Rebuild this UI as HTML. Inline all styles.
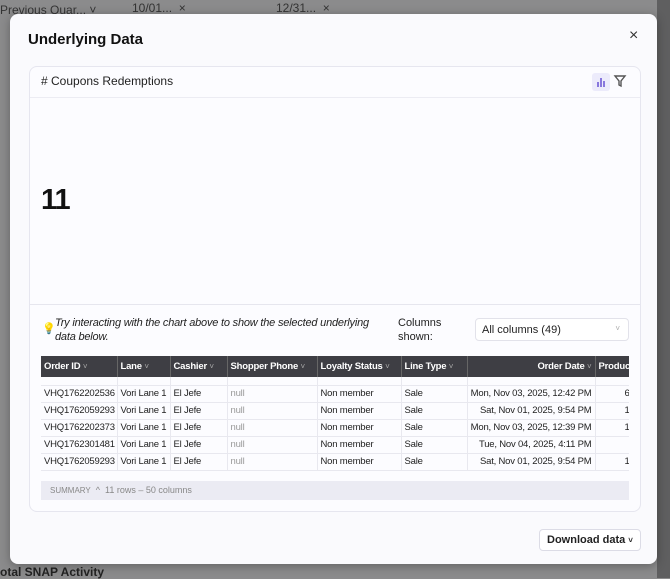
<!DOCTYPE html>
<html><head><style>
*{box-sizing:border-box;margin:0;padding:0}
body{width:670px;height:578px;overflow:hidden;background:#8b8b8c;font-family:"Liberation Sans",sans-serif;position:relative}
.bgtxt{position:absolute;color:#222;font-size:12px}
.modal{position:absolute;left:10px;top:14px;width:647px;height:550px;background:#fafafd;border-radius:8px;box-shadow:0 2px 10px rgba(0,0,0,.3)}
.abs{position:absolute}
.card{position:absolute;left:19px;top:52px;width:612px;height:446px;border:1px solid #e6e6ef;border-radius:8px;background:#fcfcff}
table{border-collapse:collapse;font-size:9.5px;color:#222;table-layout:fixed;letter-spacing:-0.2px}
th{background:#3e3e44;color:#fff;font-weight:bold;height:21px;text-align:left;padding:0 3px;border-right:1px solid #666;white-space:nowrap;overflow:hidden}
td{height:17px;line-height:16px;padding:0 3px;border-right:1px solid #e8e8ef;border-bottom:1px solid #e8e8ef;white-space:nowrap;overflow:hidden}
tr.sp td{height:8px;line-height:0;font-size:0;padding:0}
.ch{font-size:8px;color:#aaa;font-weight:normal}
</style></head><body>
<div class="bgtxt" style="left:0;top:3px;color:#333">Previous Quar... ˅</div>
<div class="bgtxt" style="left:132px;top:1px;color:#333">10/01... &nbsp;×</div>
<div class="bgtxt" style="left:276px;top:1px;color:#333">12/31... &nbsp;×</div>
<div class="bgtxt" style="left:0;top:565px;font-weight:bold;font-size:12px">otal SNAP Activity</div>
<div class="abs" style="left:657px;top:0;width:13px;height:578px;background:#5f5f60"></div>
<div class="modal">
  <div class="abs" style="left:18px;top:17px;font-size:15px;font-weight:bold;color:#111">Underlying Data</div>
  <div class="abs" style="left:619px;top:13px;font-size:16px;color:#333">×</div>
  <div class="card">
    <div class="abs" style="left:11px;top:7px;font-size:12px;color:#222"># Coupons Redemptions</div>
    <div class="abs" style="left:562px;top:6px;width:18px;height:18px;background:#ecebfb;border-radius:3px">
      <svg width="18" height="18"><g fill="#8877dd"><rect x="5" y="9" width="2" height="5"/><rect x="8" y="5" width="2" height="9"/><rect x="11" y="8" width="2" height="6"/></g></svg></div>
    <svg class="abs" style="left:583px;top:6px" width="14" height="16"><path d="M2 3h10l-4 5v5l-2-1v-4z" fill="none" stroke="#555" stroke-width="1.4"/></svg>
    <div class="abs" style="left:0;top:30px;width:610px;border-top:1px solid #ececf3"></div>
    <div class="abs" style="left:11px;top:117px;font-size:29px;font-weight:bold;color:#111;letter-spacing:-1px">11</div>
    <div class="abs" style="left:0;top:237px;width:610px;border-top:1px solid #e6e6ee"></div>
    <div class="abs" style="left:12px;top:255px;font-size:11px;color:#e8c24a">💡</div>
    <div class="abs" style="left:25px;top:249px;width:330px;font-size:11px;font-style:italic;color:#222;line-height:14px;letter-spacing:-0.2px">Try interacting with the chart above to show the selected underlying data below.</div>
    <div class="abs" style="left:368px;top:249px;font-size:11px;color:#222;line-height:14px">Columns<br>shown:</div>
    <div class="abs" style="left:445px;top:251px;width:154px;height:23px;border:1px solid #e2e2ea;border-radius:4px;background:#fff;font-size:11px;padding:5px 6px;color:#222">All columns (49)<span style="position:absolute;right:8px;top:5px;font-size:8px;color:#aaa">˅</span></div>
    <div class="abs" style="left:11px;top:289px;width:588px;height:119px;overflow:hidden">
    <table style="width:620px">
      <colgroup><col style="width:76px"><col style="width:53px"><col style="width:57px"><col style="width:90px"><col style="width:84px"><col style="width:66px"><col style="width:128px"><col style="width:66px"></colgroup>
      <tr><th>Order ID <span class="ch">˅</span></th><th>Lane <span class="ch">˅</span></th><th>Cashier <span class="ch">˅</span></th><th>Shopper Phone <span class="ch">˅</span></th><th>Loyalty Status <span class="ch">˅</span></th><th>Line Type <span class="ch">˅</span></th><th style="text-align:right">Order Date <span class="ch">˅</span></th><th>Product</th></tr>
      <tr class="sp"><td></td><td></td><td></td><td></td><td></td><td></td><td></td><td></td></tr>
      <tr><td>VHQ1762202536</td><td>Vori Lane 1</td><td>El Jefe</td><td style="color:#999">null</td><td>Non member</td><td>Sale</td><td style="text-align:right">Mon, Nov 03, 2025, 12:42 PM</td><td style="padding-left:29px">6</td></tr>
      <tr><td>VHQ1762059293</td><td>Vori Lane 1</td><td>El Jefe</td><td style="color:#999">null</td><td>Non member</td><td>Sale</td><td style="text-align:right">Sat, Nov 01, 2025, 9:54 PM</td><td style="padding-left:29px">1</td></tr>
      <tr><td>VHQ1762202373</td><td>Vori Lane 1</td><td>El Jefe</td><td style="color:#999">null</td><td>Non member</td><td>Sale</td><td style="text-align:right">Mon, Nov 03, 2025, 12:39 PM</td><td style="padding-left:29px">1</td></tr>
      <tr><td>VHQ1762301481</td><td>Vori Lane 1</td><td>El Jefe</td><td style="color:#999">null</td><td>Non member</td><td>Sale</td><td style="text-align:right">Tue, Nov 04, 2025, 4:11 PM</td><td></td></tr>
      <tr><td>VHQ1762059293</td><td>Vori Lane 1</td><td>El Jefe</td><td style="color:#999">null</td><td>Non member</td><td>Sale</td><td style="text-align:right">Sat, Nov 01, 2025, 9:54 PM</td><td style="padding-left:29px">1</td></tr>
    </table></div>
    <div class="abs" style="left:11px;top:414px;width:588px;height:19px;background:#ebebf3;font-size:9px;color:#888;padding:4px 9px"><span style="font-size:8px">SUMMARY</span> &nbsp;^ &nbsp;11 rows – 50 columns</div>
  </div>
  <div class="abs" style="left:529px;top:515px;width:102px;height:22px;border:1px solid #dcdce6;border-radius:4px;background:#fff;font-size:11px;font-weight:bold;color:#222;padding:4px 7px">Download data <span style="font-size:8px">˅</span></div>
</div>
</body></html>
